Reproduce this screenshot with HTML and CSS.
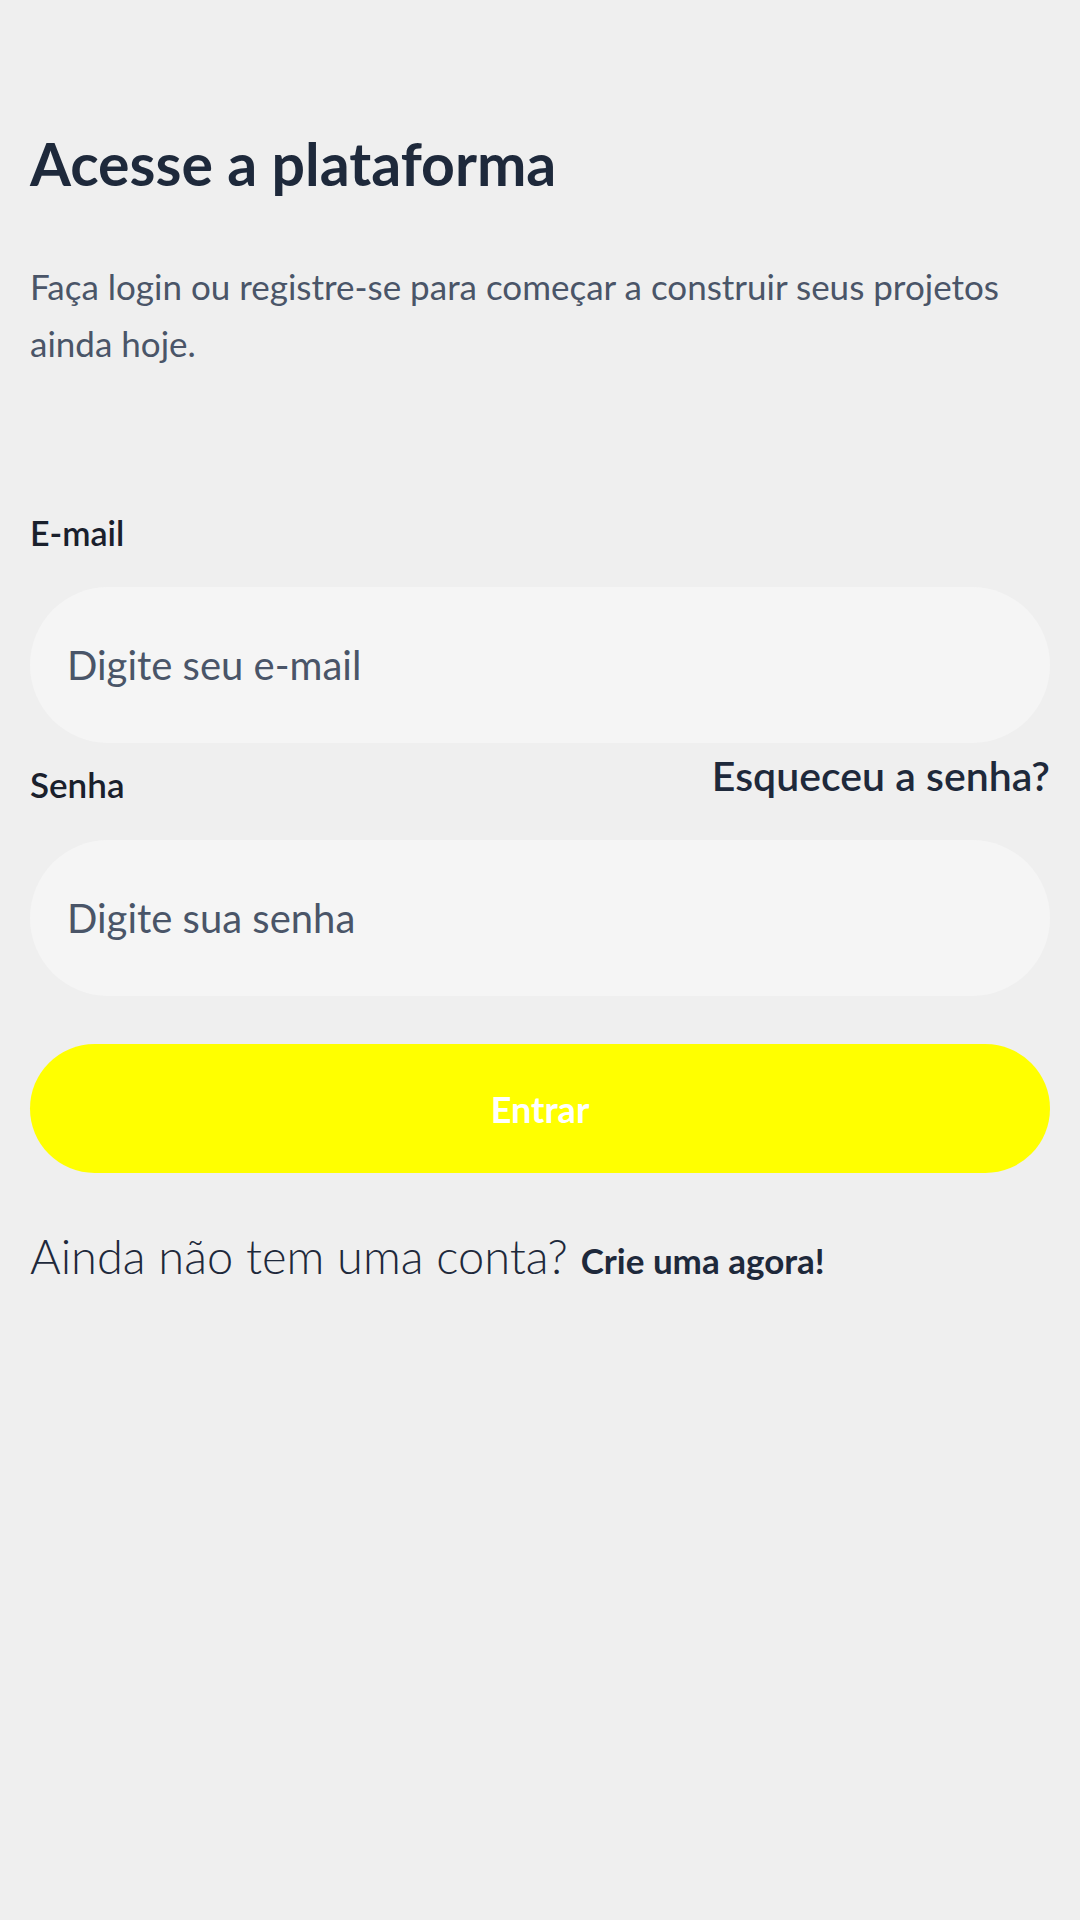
FILE: index.html
```html
<!DOCTYPE html>
<html lang="pt-BR">
<head>
<meta charset="utf-8">
<title>Acesse a plataforma</title>
<link rel="stylesheet" href="styles.css">
</head>
<body>
<main class="page">
  <header class="intro">
    <h1 class="title">Acesse a plataforma</h1>
    <p class="lead">Faça login ou registre-se para começar a construir seus projetos ainda hoje.</p>
  </header>
  <form class="form">
    <label class="label label-email" for="email">E-mail</label>
    <input class="field" id="email" type="email" placeholder="Digite seu e-mail">
    <div class="row">
      <label class="label label-senha" for="senha">Senha</label>
      <a class="forgot" href="#">Esqueceu a senha?</a>
    </div>
    <input class="field field-senha" id="senha" type="password" placeholder="Digite sua senha">
    <button class="submit" type="button">Entrar</button>
  </form>
  <p class="signup">Ainda não tem uma conta? <a class="signup-link" href="#">Crie uma agora!</a></p>
</main>
</body>
</html>
```

FILE: styles.css
```css
* { box-sizing: border-box; }
html, body {
  margin: 0;
  padding: 0;
  background: #efefef;
}
body {
  font-family: Lato, "Open Sans", sans-serif;
  color: #1e293b;
  min-height: 1920px;
}
.page {
  padding: 128px 30px 0 30px;
}
.title {
  margin: 0;
  font-size: 59px;
  line-height: 72px;
  font-weight: 700;
  color: #1e293b;
}
.lead {
  margin: 58px 0 0 0;
  font-size: 35px;
  line-height: 57px;
  font-weight: 400;
  color: #4a5568;
}
.form {
  display: flex;
  flex-direction: column;
  margin-top: 141px;
}
.label {
  font-size: 35px;
  line-height: 40px;
  font-weight: 600;
  color: #1a202c;
}
.label-email {
  display: block;
  font-size: 34px;
}
.field {
  margin-top: 34px;
  width: 100%;
  height: 156px;
  border: none;
  outline: none;
  border-radius: 78px;
  background: #f5f5f5;
  padding: 0 37px;
  font-family: Lato, "Open Sans", sans-serif;
  font-size: 40px;
  font-weight: 400;
  color: #4a5568;
}
.field::placeholder {
  color: #4a5568;
  opacity: 1;
}
.row {
  display: flex;
  justify-content: space-between;
  align-items: flex-start;
  margin-top: 13px;
}
.label-senha {
  margin-top: 8px;
}
.forgot {
  font-size: 41px;
  line-height: 40px;
  font-weight: 600;
  color: #1e293b;
  text-decoration: none;
}
.field-senha { margin-top: 36px; }
.submit {
  margin-top: 48px;
  width: 100%;
  height: 129px;
  border: none;
  border-radius: 65px;
  background: #ffff00;
  color: #ffffff;
  font-family: Lato, "Open Sans", sans-serif;
  font-size: 36px;
  font-weight: 700;
  cursor: pointer;
}
.signup {
  margin: 55px 0 0 0;
  font-size: 47px;
  line-height: 56px;
  font-weight: 300;
  color: #1e293b;
}
.signup-link {
  font-size: 35px;
  font-weight: 700;
  color: #1e293b;
  text-decoration: none;
}
```
